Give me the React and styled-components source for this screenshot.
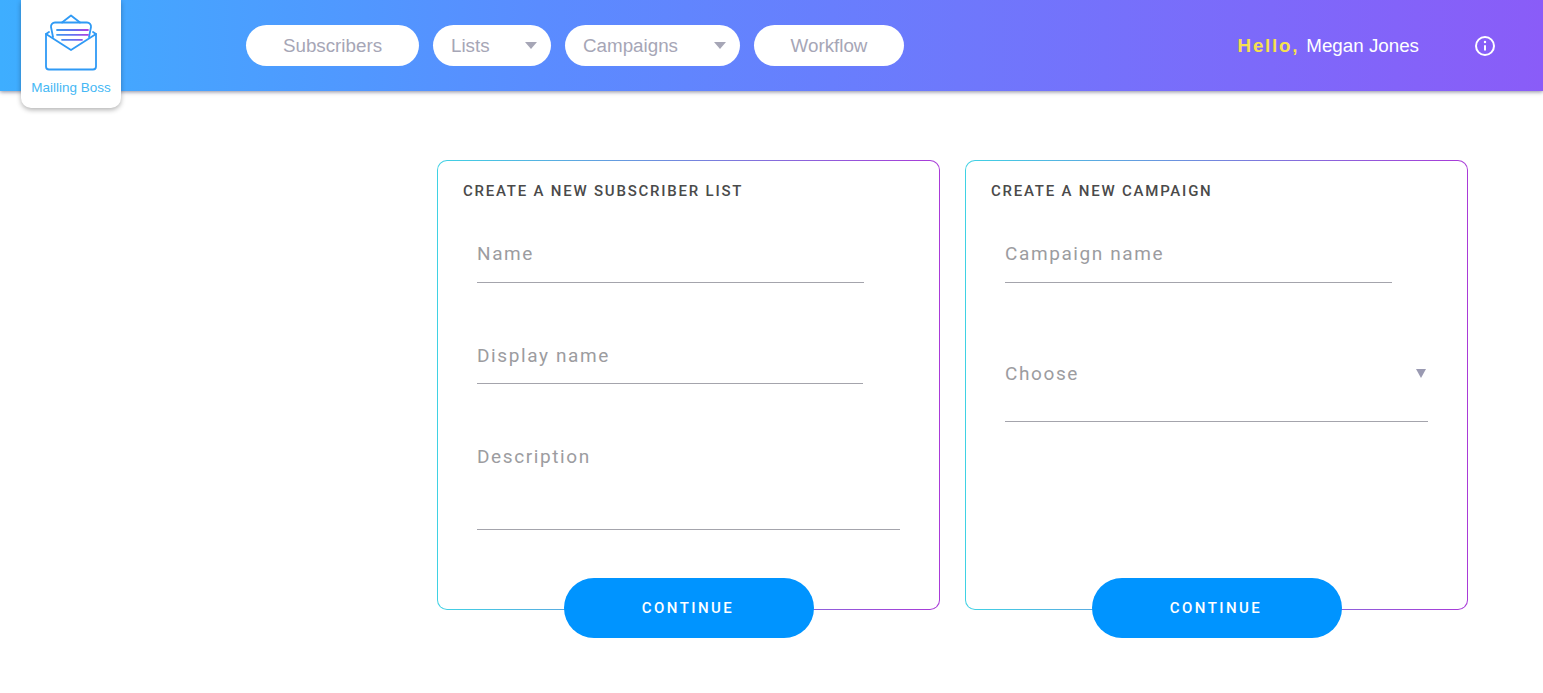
import React from 'react';
import styled, { createGlobalStyle } from 'styled-components';

const GlobalStyle = createGlobalStyle`
  html, body {
    margin: 0;
    padding: 0;
    background: #fff;
    font-family: "Roboto", "Liberation Sans", sans-serif;
  }
  * {
    box-sizing: border-box;
  }
`;

const Header = styled.header`
  display: flex;
  align-items: flex-start;
  height: 91px;
  padding: 0 47px 0 21px;
  background: linear-gradient(90deg, #3eaeff 0%, #5a8cff 35%, #8a5cf8 100%);
  box-shadow: 0 1px 4px rgba(60, 60, 90, 0.6);
`;

const LogoCard = styled.div`
  display: flex;
  flex-direction: column;
  align-items: center;
  flex: none;
  width: 100px;
  height: 108px;
  padding-top: 14px;
  background: #fff;
  border-radius: 0 0 10px 10px;
  box-shadow: 0 2px 5px rgba(0, 0, 0, 0.3);
`;

const LogoIcon = styled.svg`
  display: block;
  width: 54px;
  height: 57px;
`;

const LogoText = styled.div`
  margin-top: 9px;
  font-family: "Liberation Sans", Arial, sans-serif;
  font-size: 13.5px;
  line-height: 16px;
  color: #45b8f5;
`;

const Nav = styled.nav`
  display: flex;
  gap: 14px;
  margin: 25px 0 0 125px;
`;

const Pill = styled.div`
  display: flex;
  align-items: center;
  justify-content: ${(p) => (p.$dropdown ? 'space-between' : 'center')};
  width: ${(p) => p.$width}px;
  height: 41px;
  padding: ${(p) => (p.$dropdown ? '0 14px 0 18px' : '0')};
  background: #fff;
  border-radius: 21px;
  font-family: "Liberation Sans", Arial, sans-serif;
  font-size: 18.8px;
  color: #a6a6b6;
`;

const Caret = styled.span`
  width: 0;
  height: 0;
  border-left: 6.5px solid transparent;
  border-right: 6.5px solid transparent;
  border-top: 7px solid #a6a6b6;
`;

const UserArea = styled.div`
  display: flex;
  align-items: center;
  height: 91px;
  margin-left: auto;
  font-family: "Liberation Sans", Arial, sans-serif;
  font-size: 18.8px;
`;

const Hello = styled.span`
  font-weight: 700;
  letter-spacing: 1.75px;
  color: #f6e04e;
`;

const UserName = styled.span`
  margin-left: 7px;
  color: #fff;
`;

const InfoIcon = styled.svg`
  display: block;
  width: 22px;
  height: 22px;
  margin-left: 55px;
`;

const Main = styled.main`
  display: flex;
  gap: 25px;
  padding: 69px 0 55px 437px;
`;

const Card = styled.section`
  position: relative;
  flex: none;
  width: 503px;
  height: 450px;
  padding: 20px 25px 0;
  border: 1px solid transparent;
  border-radius: 10px;
  background: linear-gradient(#fff, #fff) padding-box,
    linear-gradient(90deg, #3fd2e4 0%, #a93ad8 100%) border-box;
`;

const CardTitle = styled.h2`
  margin: 0;
  font-size: 15px;
  font-weight: 500;
  line-height: 20px;
  letter-spacing: 1.78px;
  color: #4a4a4a;
`;

const Field = styled.div`
  position: relative;
  width: ${(p) => p.$width}px;
  margin: ${(p) => p.$top}px 0 0 14px;
  padding-bottom: ${(p) => p.$bottom}px;
  border-bottom: 1px solid #a4a4ac;
`;

const FieldLabel = styled.div`
  font-size: 19px;
  line-height: 24px;
  letter-spacing: 1.6px;
  color: #9c9ca0;
`;

const SelectCaret = styled.span`
  position: absolute;
  top: 7px;
  right: 2px;
  width: 0;
  height: 0;
  border-left: 5px solid transparent;
  border-right: 5px solid transparent;
  border-top: 9px solid #9a9ab2;
`;

const ContinueButton = styled.button`
  position: absolute;
  left: 126px;
  bottom: -29px;
  width: 250px;
  height: 60px;
  padding: 0 2px 0 0;
  border: none;
  border-radius: 30px;
  background: #0094ff;
  font-family: "Roboto", sans-serif;
  font-size: 15px;
  font-weight: 500;
  letter-spacing: 2.45px;
  color: #fff;
`;

const Logo = () => (
  <LogoIcon viewBox="44 14 54 57" fill="none" stroke="#2f9af5" strokeWidth="1.8" strokeLinejoin="round" strokeLinecap="round">
    <defs>
      <linearGradient id="letterLines" x1="56" x2="88" y1="0" y2="0" gradientUnits="userSpaceOnUse">
        <stop offset="0" stopColor="#3a9bf0" />
        <stop offset="0.6" stopColor="#6a6cf0" />
        <stop offset="1" stopColor="#b040e0" />
      </linearGradient>
    </defs>
    <path d="M49 32 L46 34 V66.5 a3 3 0 0 0 3 3 H93 a3 3 0 0 0 3 -3 V34 L93 32" />
    <path d="M46 34 L71 50 L96 34" />
    <path d="M53 37 L51 27 a4 4 0 0 1 4 -4.5 H87 a4 4 0 0 1 4 4.5 L89 37" />
    <path d="M62 22.5 L71 15.5 L80 22.5" />
    <path d="M57 30 H88 M57 34.8 H88 M62 39.8 H82" stroke="url(#letterLines)" />
  </LogoIcon>
);

const Info = () => (
  <InfoIcon viewBox="0 0 22 22" fill="none" stroke="#fff" strokeWidth="2">
    <circle cx="11" cy="11" r="9" />
    <path d="M11 10.2 V15.5" />
    <circle cx="11" cy="7" r="0.6" fill="#fff" strokeWidth="1.2" />
  </InfoIcon>
);

const App = () => {
  return (
    <>
      <GlobalStyle />
      <Header>
        <LogoCard>
          <Logo />
          <LogoText>Mailling Boss</LogoText>
        </LogoCard>
        <Nav>
          <Pill $width={173}>Subscribers</Pill>
          <Pill $width={118} $dropdown>Lists<Caret /></Pill>
          <Pill $width={175} $dropdown>Campaigns<Caret /></Pill>
          <Pill $width={150}>Workflow</Pill>
        </Nav>
        <UserArea>
          <Hello>Hello,</Hello>
          <UserName>Megan Jones</UserName>
          <Info />
        </UserArea>
      </Header>
      <Main>
        <Card>
          <CardTitle>CREATE A NEW SUBSCRIBER LIST</CardTitle>
          <Field $width={387} $top={41} $bottom={16}>
            <FieldLabel>Name</FieldLabel>
          </Field>
          <Field $width={386} $top={61} $bottom={15}>
            <FieldLabel>Display name</FieldLabel>
          </Field>
          <Field $width={423} $top={61} $bottom={60}>
            <FieldLabel>Description</FieldLabel>
          </Field>
          <ContinueButton>CONTINUE</ContinueButton>
        </Card>
        <Card>
          <CardTitle>CREATE A NEW CAMPAIGN</CardTitle>
          <Field $width={387} $top={41} $bottom={16}>
            <FieldLabel>Campaign name</FieldLabel>
          </Field>
          <Field $width={423} $top={79} $bottom={35}>
            <FieldLabel>Choose</FieldLabel>
            <SelectCaret />
          </Field>
          <ContinueButton>CONTINUE</ContinueButton>
        </Card>
      </Main>
    </>
  );
};

export default App;
